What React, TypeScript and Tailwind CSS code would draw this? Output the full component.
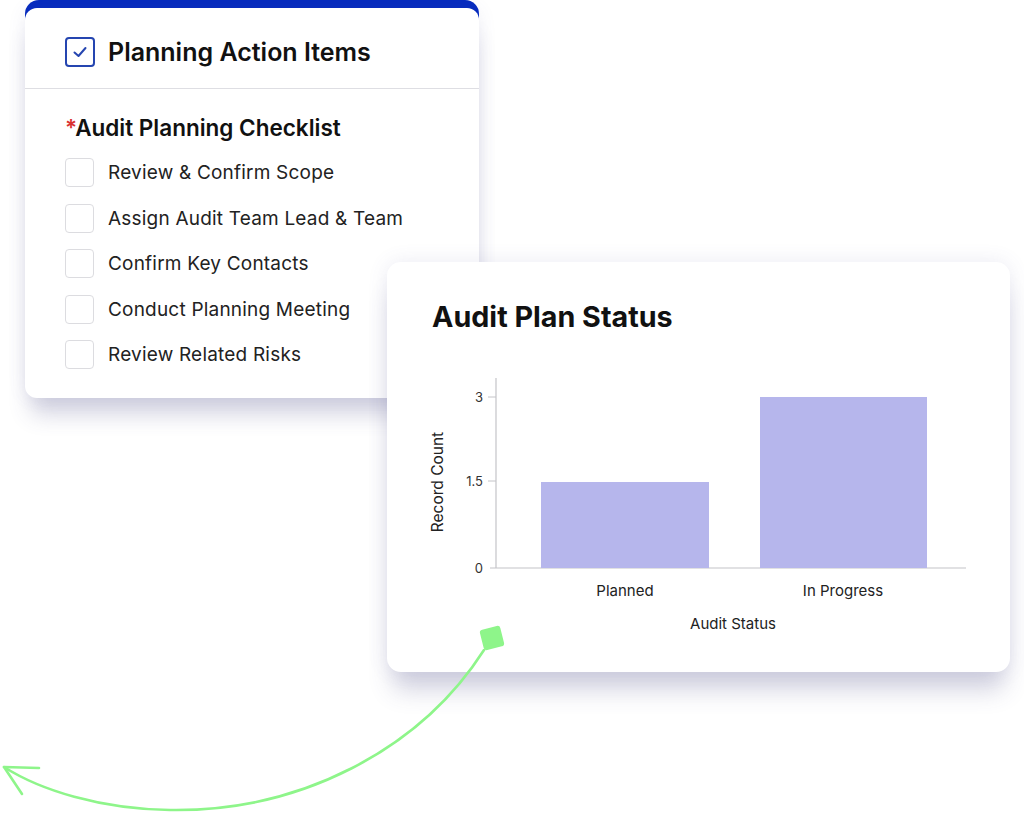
import React from 'react'

const FONT = { fontFamily: 'Inter, "Noto Sans", sans-serif' }

const CHECKLIST = [
  'Review & Confirm Scope',
  'Assign Audit Team Lead & Team',
  'Confirm Key Contacts',
  'Conduct Planning Meeting',
  'Review Related Risks',
]

/**
 * 左上角的“Planning Action Items”卡片。
 */
function ActionItemsCard() {
  return (
    <div className="absolute left-[25px] top-0 w-[454px]">
      <div className="h-[20px] rounded-t-[14px] bg-[#062bbf]" />
      <div className="-mt-[12px] rounded-[12px] bg-white pb-[29px] shadow-[0_22px_22px_-6px_rgba(70,70,130,0.24),0_0_18px_rgba(90,90,160,0.10)]">
        <div className="flex items-center gap-[13px] border-b border-[#dedee3] px-[40px] pb-[21px] pt-[29px]">
          <div className="flex h-[30px] w-[30px] items-center justify-center rounded-[4px] border-2 border-[#2545b0]">
            <svg width="16" height="16" viewBox="0 0 16 16" fill="none">
              <path d="M2.5 8.5 L6.5 12 L13.5 4" stroke="#2545b0" strokeWidth="2" strokeLinecap="round" strokeLinejoin="round" />
            </svg>
          </div>
          <span className="text-[25px] font-semibold leading-[30px] text-[#111]">Planning Action Items</span>
        </div>
        <div className="px-[40px] pt-[25px]">
          <div className="text-[22.5px] font-semibold leading-[28px] text-[#111]">
            <span className="text-[#d93030]">*</span>Audit Planning Checklist
          </div>
          <div className="mt-[16px] flex flex-col gap-[16.5px]">
            {CHECKLIST.map((item) => (
              <div key={item} className="flex items-center gap-[14px]">
                <div className="h-[29px] w-[29px] rounded-[4px] border border-[#dcdce0] bg-white" />
                <span className="text-[19px] leading-[29px] tracking-[0.2px] text-[#222]">{item}</span>
              </div>
            ))}
          </div>
        </div>
      </div>
    </div>
  )
}

/**
 * 右侧“Audit Plan Status”柱状图卡片。
 */
function PlanStatusCard() {
  return (
    <div className="absolute left-[387px] top-[262px] h-[410px] w-[623px] rounded-[14px] bg-white shadow-[0_24px_24px_-6px_rgba(70,70,130,0.24),0_0_20px_rgba(90,90,160,0.12)]">
      <div className="pl-[45px] pt-[37px] text-[28.7px] font-bold leading-[36px] text-[#111]">Audit Plan Status</div>
      <svg width="623" height="320" viewBox="0 0 623 320" className="mt-[7px] block">
        <line x1="109" y1="36" x2="109" y2="226" stroke="#c4c4c8" strokeWidth="1.2" />
        <line x1="103" y1="226" x2="579" y2="226" stroke="#c4c4c8" strokeWidth="1.2" />
        <line x1="101" y1="55" x2="109" y2="55" stroke="#c4c4c8" strokeWidth="1" />
        <line x1="101" y1="139" x2="109" y2="139" stroke="#c4c4c8" strokeWidth="1" />
        <rect x="154" y="140" width="168" height="86" fill="#b6b6ec" />
        <rect x="373" y="55" width="167" height="171" fill="#b6b6ec" />
        <g fill="#333" fontSize="13" textAnchor="end" style={FONT}>
          <text x="96" y="60">3</text>
          <text x="96" y="144">1.5</text>
          <text x="96" y="231">0</text>
        </g>
        <g fill="#222" fontSize="15" textAnchor="middle" style={FONT}>
          <text x="238" y="254">Planned</text>
          <text x="456" y="254">In Progress</text>
          <text x="346" y="287">Audit Status</text>
          <text transform="translate(56 140) rotate(-90)" fontSize="15.5">Record Count</text>
        </g>
      </svg>
    </div>
  )
}

function Connector() {
  return (
    <svg className="pointer-events-none absolute left-0 top-0" width="1024" height="813" viewBox="0 0 1024 813" fill="none">
      <path d="M484 650 C 420 750 300 812 170 810 C 100 809 40 790 4 767" stroke="#8ef58a" strokeWidth="2.6" strokeLinecap="round" />
      <path d="M39 768 L4 767 L22 794" stroke="#8ef58a" strokeWidth="2.6" strokeLinecap="round" strokeLinejoin="round" />
      <rect x="481.5" y="627.5" width="21" height="21" rx="3" fill="#8ef58a" transform="rotate(-14 492 638)" />
    </svg>
  )
}

export default function App() {
  return (
    <div className="relative h-[813px] w-[1024px] overflow-hidden bg-white" style={FONT}>
      <ActionItemsCard />
      <PlanStatusCard />
      <Connector />
    </div>
  )
}
